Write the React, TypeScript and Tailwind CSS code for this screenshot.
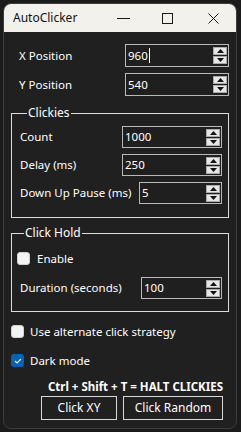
import React from "react";

const font = { fontFamily: '"Noto Sans", "Liberation Sans", sans-serif' };

function SpinBox({ value, width, height = 22, caret = false }: { value: string; width: number; height?: number; caret?: boolean }) {
  return (
    <div
      className="flex items-center justify-between border border-[#b9b9b9] bg-[#1f1f1f] pl-[2px] pr-[1px]"
      style={{ width, height }}
    >
      <span className="flex items-center text-[11.5px] leading-none text-white">
        {value}
        {caret && <span className="ml-px inline-block h-[15px] w-px bg-white" />}
      </span>
      <div className="flex flex-col gap-px">
        <div className="flex h-[8px] w-[14px] items-center justify-center border border-[#a9a9a9] bg-[#e6e6e6]">
          <svg width="7" height="4" viewBox="0 0 7 4">
            <path d="M0 4 L3.5 0 L7 4 Z" fill="#111" />
          </svg>
        </div>
        <div className="flex h-[8px] w-[14px] items-center justify-center border border-[#a9a9a9] bg-[#e6e6e6]">
          <svg width="7" height="4" viewBox="0 0 7 4">
            <path d="M0 0 L7 0 L3.5 4 Z" fill="#111" />
          </svg>
        </div>
      </div>
    </div>
  );
}

function Checkbox({ checked }: { checked?: boolean }) {
  if (checked) {
    return (
      <div className="flex h-[13px] w-[13px] items-center justify-center rounded-[3px] bg-[#0063b8]">
        <svg width="8" height="6" viewBox="0 0 8 6">
          <path d="M1 3 L3 5 L7 1" fill="none" stroke="#fff" strokeWidth="1.1" />
        </svg>
      </div>
    );
  }
  return <div className="h-[13px] w-[13px] rounded-[3px] border border-[#d0d0d0] bg-[#f4f4f4]" />;
}

function Row({ label, children, className = "" }: { label: string; children: React.ReactNode; className?: string }) {
  return (
    <div className={`flex items-center justify-between ${className}`}>
      <span className="text-[11.5px] leading-none text-white">{label}</span>
      {children}
    </div>
  );
}

export default function App() {
  return (
    <div className="h-[432px] w-[241px] bg-[#1b1b1b] p-[3px] pr-[4px]" style={font}>
      <div className="flex h-full flex-col overflow-hidden rounded-[8px] border border-[#3c3c3c] bg-[#202020]">
        <div className="flex h-[28px] shrink-0 items-center bg-[#f3f1ec] pl-[9px]">
          <span className="w-[104px] text-[12px] text-[#111]">AutoClicker</span>
          <svg width="14" height="10" viewBox="0 0 14 10">
            <path d="M0 5.5 H13" stroke="#1a1a1a" strokeWidth="1" />
          </svg>
          <svg className="ml-[31px]" width="11" height="11" viewBox="0 0 11 11">
            <rect x="0.5" y="0.5" width="10" height="10" fill="none" stroke="#1a1a1a" strokeWidth="1" />
          </svg>
          <svg className="ml-[35px]" width="11" height="11" viewBox="0 0 11 11">
            <path d="M0.5 0.5 L10.5 10.5 M10.5 0.5 L0.5 10.5" stroke="#1a1a1a" strokeWidth="1" />
          </svg>
        </div>

        <div className="flex flex-col pt-[12px]">
          <div className="flex flex-col gap-[6px] pl-[15px] pr-[7px]">
            <Row label="X Position">
              <SpinBox value="960" width={104} height={23} caret />
            </Row>
            <Row label="Y Position">
              <SpinBox value="540" width={104} height={23} />
            </Row>
          </div>

          <fieldset className="mx-[7px] mt-[9px] border border-[#dcdcdc] pb-[13px] pl-[8px] pr-[6px]">
            <legend className="ml-[7px] px-px text-[12px] leading-[16px] text-white">Clickies</legend>
            <div className="flex flex-col gap-[6px] pt-[5px]">
              <Row label="Count">
                <SpinBox value="1000" width={100} />
              </Row>
              <Row label="Delay (ms)">
                <SpinBox value="250" width={100} />
              </Row>
              <Row label="Down Up Pause (ms)">
                <SpinBox value="5" width={83} />
              </Row>
            </div>
          </fieldset>

          <fieldset className="mx-[7px] mt-[7px] border border-[#dcdcdc] pb-[12px] pl-[5px] pr-[6px]">
            <legend className="ml-[7px] px-px text-[12px] leading-[16px] text-white">Click Hold</legend>
            <div className="mt-[11px] flex items-center gap-[7px]">
              <Checkbox />
              <span className="text-[11.5px] leading-none text-white">Enable</span>
            </div>
            <Row label="Duration (seconds)" className="mt-[12px] pl-[3px]">
              <SpinBox value="100" width={81} />
            </Row>
          </fieldset>

          <div className="mt-[13px] flex items-center gap-[6px] pl-[7px]">
            <Checkbox />
            <span className="text-[11.5px] leading-none text-white">Use alternate click strategy</span>
          </div>
          <div className="mt-[16px] flex items-center gap-[6px] pl-[7px]">
            <Checkbox checked />
            <span className="text-[11.5px] leading-none text-white">Dark mode</span>
          </div>

          <div className="mt-[14px] pr-[13px] text-right text-[11.5px] font-bold leading-none text-white">
            Ctrl + Shift + T = HALT CLICKIES
          </div>
          <div className="mt-[3px] flex justify-end gap-[6px] pr-[13px]">
            <button className="h-[24px] w-[76px] border border-[#d8d8d8] bg-[#202020] text-[12px] text-white">Click XY</button>
            <button className="h-[24px] w-[100px] border border-[#d8d8d8] bg-[#202020] text-[12px] text-white">Click Random</button>
          </div>
        </div>
      </div>
    </div>
  );
}
